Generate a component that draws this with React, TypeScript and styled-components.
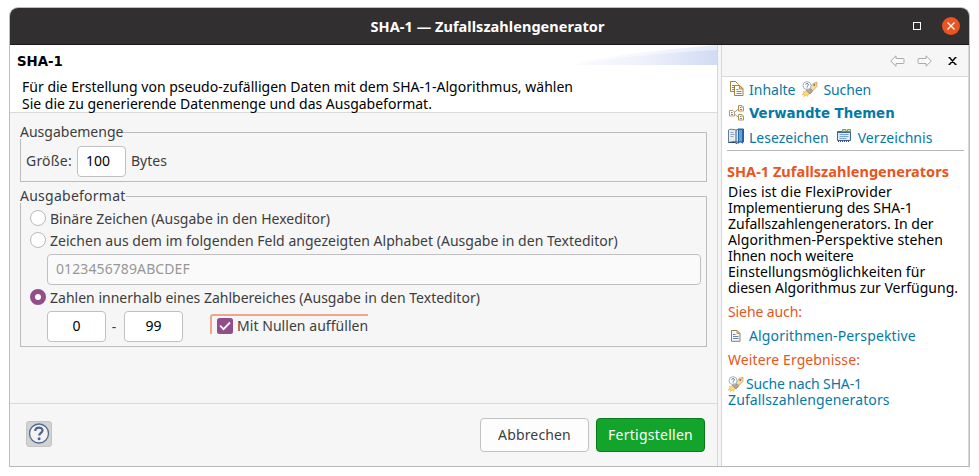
import React from "react";
import styled, { createGlobalStyle } from "styled-components";

const Global = createGlobalStyle`
  *, *::before, *::after { box-sizing: border-box; }
  body { margin: 0; background: #fff; }
  #root { display: flow-root; }
`;

const Window = styled.div`
  width: 961px;
  height: 460px;
  margin: 7px 0 0 9px;
  border: 1px solid #bebebe;
  border-bottom-color: #b8b8b8;
  border-radius: 9px 9px 0 0;
  overflow: hidden;
  display: flex;
  flex-direction: column;
  background: #f6f6f6;
  color: #3d3d3d;
  font: 14px/16px "Noto Sans", sans-serif;
`;

const Text = styled.span<{ $ls?: number }>`
  white-space: nowrap;
  letter-spacing: ${(p) => p.$ls ?? 0}px;
`;

const TitleBar = styled.header`
  height: 37px;
  flex: none;
  display: grid;
  grid-template-columns: 105px 1fr 109px;
  align-items: center;
  background: #322f30;
  border-bottom: 1px solid #1c1a1b;
  color: #fff;
  font-size: 14.5px;
  font-weight: 700;
  text-align: center;
`;

const WindowButtons = styled.div`
  display: flex;
  justify-content: flex-end;
  align-items: center;
  gap: 21px;
  padding-right: 9px;
`;

const Maximize = styled.span`
  width: 8px;
  height: 8px;
  border: 1px solid #fff;
`;

const Close = styled.span`
  width: 18px;
  height: 18px;
  border-radius: 50%;
  background: #e95420;
  display: grid;
  place-items: center;
`;

const Body = styled.div`
  flex: 1;
  display: flex;
  gap: 3px;
`;

const Main = styled.main`
  width: 708px;
  border-right: 1px solid #d6d6d6;
  display: flex;
  flex-direction: column;
`;

const Intro = styled.div`
  height: 68px;
  background: #fff;
  border-bottom: 1px solid #dadada;
  color: #000;
  display: flex;
  justify-content: space-between;
`;

const IntroText = styled.div`
  padding: 8px 0 0 7px;
`;

const Heading = styled.h1`
  margin: 0 0 8px;
  font: 700 13.33px/17px "DejaVu Sans", sans-serif;
`;

const IntroLine = styled.div`
  padding-left: 5px;
  line-height: 17px;
`;

const Swoosh = styled.svg`
  flex: none;
  display: block;
  width: 142px;
  height: 20px;
`;

const Form = styled.div`
  flex: 1;
  padding: 11px 10px 0;
`;

const Group = styled.section`
  margin-bottom: 6px;
`;

const GroupHead = styled.div`
  height: 15px;
  display: flex;
  align-items: flex-end;
`;

const GroupTitle = styled.div`
  height: 15px;
`;

const GroupRule = styled.div`
  flex: 1;
  height: 7px;
  border: solid #bcbcbc;
  border-width: 1px 1px 0 0;
`;

const GroupBody = styled.div<{ $height: number; $top: number }>`
  height: ${(p) => p.$height}px;
  padding: ${(p) => p.$top}px 5px 0;
  border: solid #bcbcbc;
  border-width: 0 1px 1px;
`;

const Row = styled.div`
  display: flex;
  align-items: center;
`;

const AmountRow = styled(Row)`
  height: 31px;
  gap: 5px;

  & > label, & > span { padding-bottom: 2px; }
`;

const AmountLabel = styled.label`
  width: 46px;
`;

const Field = styled.div<{ $width: number; $disabled?: boolean; $center?: boolean }>`
  width: ${(p) => p.$width}px;
  height: 31px;
  flex: none;
  padding: 6px 8px 0;
  border: 1px solid #c0c0c0;
  border-radius: 4px;
  background: ${(p) => (p.$disabled ? "#fafafa" : "#fff")};
  color: ${(p) => (p.$disabled ? "#979797" : "#000")};
  text-align: ${(p) => (p.$center ? "center" : "left")};
`;

const Option = styled(Row)`
  height: 22px;
  padding-left: 4px;
  gap: 4px;
`;

const OptionText = styled(Text)`
  padding-top: 2px;
`;

const Radio = styled.span<{ $on?: boolean }>`
  width: 16px;
  height: 16px;
  border-radius: 50%;
  border: ${(p) => (p.$on ? "5px solid #924d8b" : "1px solid #bababa")};
  background: #fff;
`;

const Indented = styled.div`
  display: flex;
  padding: 3px 0 1px 21px;
`;

const Range = styled(Indented)`
  align-items: center;
  height: 35px;
`;

const Dash = styled.span`
  width: 18px;
  padding-right: 2px;
  text-align: center;
`;

const Focused = styled.div`
  width: 158px;
  height: 20px;
  margin: -5px 0 0 27px;
  display: flex;
  align-items: center;
  gap: 4px;
  padding: 2px 0 0 5px;
  border: solid #f1a58b;
  border-width: 2px 0 0 2px;
  border-top-left-radius: 3px;
`;

const Check = styled.span`
  width: 16px;
  height: 16px;
  flex: none;
  border-radius: 2.5px;
  background: #924d8b;
  display: grid;
  place-items: center;
`;

const Footer = styled.footer`
  height: 63px;
  border-top: 1px solid #dadada;
  display: flex;
  align-items: center;
  gap: 7px;
  padding: 0 12px 0 16px;
`;

const Help = styled.div`
  width: 26px;
  height: 26px;
  margin: -2px auto 0 0;
  border: 1px solid #c4c4c4;
  border-radius: 3px;
  background: #d2d2d2;
  display: grid;
  place-items: center;
`;

const Button = styled.button<{ $primary?: boolean }>`
  width: 109px;
  height: 34px;
  padding: 0;
  font: inherit;
  border: 1px solid ${(p) => (p.$primary ? "#0b7a1c" : "#c2c2c2")};
  border-radius: 4px;
  background: ${(p) => (p.$primary ? "#12a42b" : "#fdfdfd")};
  color: ${(p) => (p.$primary ? "#fff" : "#3d3d3d")};
`;

const Side = styled.aside`
  flex: 1;
  border-left: 1px solid #d6d6d6;
  border-right: 1px solid #d8d8d8;
  background: #fff;
  color: #000;
`;

const SideTools = styled.div`
  height: 32px;
  background: #f6f6f6;
  border-bottom: 1px solid #dadada;
  display: flex;
  align-items: center;
  justify-content: flex-end;
  padding-right: 11px;
`;

const Links = styled.nav`
  height: 74px;
  margin: 0 4px 0 5px;
  border-bottom: 1px solid #b8b8b8;
  color: #0579a6;
`;

const LinkRow = styled.div<{ $height: number }>`
  height: ${(p) => p.$height}px;
  display: flex;
  align-items: center;

  & > span, & > strong { padding-top: 2px; }
`;

const Icon = styled.svg<{ $left?: number; $right?: number }>`
  display: block;
  flex: none;
  margin: 0 ${(p) => p.$right ?? 0}px 0 ${(p) => p.$left ?? 0}px;
`;

const Strong = styled.strong`
  font: 700 13.33px/16px "DejaVu Sans", sans-serif;
`;

const Article = styled.div`
  padding: 12px 0 0 6px;
`;

const Topic = styled.h2`
  margin: 0 0 5px -1px;
  font-size: 14.5px;
  line-height: 16px;
  color: #e95420;
`;

const Line = styled.div`
  height: 16px;
`;

const SubHead = styled.div`
  margin: 8px 0;
  height: 16px;
  color: #e95420;
`;

const ResultLink = styled.div`
  height: 16px;
  display: flex;
  align-items: center;
  color: #0579a6;
`;

const SearchIcon = ({ left = 0, right = 0 }: { left?: number; right?: number }) => (
  <Icon width="16" height="16" viewBox="0 0 16 16" $left={left} $right={right}>
    <path d="M7.5 7 11 2.5 15 1.2 14.8 5.5 10.5 10Z" fill="#f6d9a0" stroke="#cb9a5c" strokeWidth=".8" />
    <path d="m7.5 7 3 3-2.5 3-3.8-3.7Z" fill="#b5a69c" stroke="#857873" strokeWidth=".8" />
    <path d="m4.5 10-3.5.7 1.2 1L0 14l2.5-.7L1.8 15.6 4.4 14l.9 1.5L7 12.8Z" fill="#ffdc66" stroke="#e0b45c" strokeWidth=".6" />
    <circle cx="12.3" cy="4" r=".9" fill="#85684b" />
    <circle cx="5" cy="4.6" r="4" fill="#fff" stroke="#a5b4c7" />
    <path d="M3.7 3.8c0-1.8 2.8-1.7 2.7 0 0 .9-1.3 1-1.3 2M5.1 6.5v.9" fill="none" stroke="#4a6588" strokeWidth=".9" />
  </Icon>
);

const ContentsIcon = () => (
  <Icon width="14" height="16" viewBox="0 0 14 16" $left={3} $right={5}>
    <path d="M.5.5h5l3 3v7h-8Z" fill="#fff" stroke="#a18138" />
    <path d="M2 4.5h4M2 6.5h3M2 8.5h3" stroke="#6d86aa" />
    <path d="M4.5 4.5h5l3.5 3v7H4.5Z" fill="#fff" stroke="#a18138" />
    <path d="M9.5 4.5v3.5H13Z" fill="#efcf7c" stroke="#b28d3b" />
    <path d="M6.5 8.5h2M6.5 10.5h5M6.5 12.5h5" stroke="#6d86aa" />
  </Icon>
);

const RelatedIcon = () => (
  <Icon width="15" height="16" viewBox="0 0 15 16" $left={2} $right={5}>
    <path d="M5 7.5 9.5 4M5 8.5l4.5 4" stroke="#93a0b4" />
    <path d="M.5 5.5H4L5.5 7v4h-5Z" fill="#fff" stroke="#b7a26c" />
    <path d="M9.5.5H13L14.5 2v4h-5ZM9.5 9.5H13l1.5 1.5v4h-5Z" fill="#fff" stroke="#b49049" />
    <path d="M2 7.5h1.5M2 9.5h2M11 2.5h1M11 4.5h2M11 11.5h1M11 13.5h2" stroke="#7188aa" />
    <path d="M12.5.5V2.5h2M12.5 9.5v2h2" fill="none" stroke="#dfb964" />
  </Icon>
);

const BookIcon = () => (
  <Icon width="17" height="17" viewBox="0 0 17 17" $left={1} $right={4}>
    <path d="M.5 2 3 1.2 8.5 2v12L6 13.3.5 14.5Z" fill="#e6f0e9" stroke="#657d9c" />
    <path d="M2.5 4.5h3M2.5 6.5h4M2.5 8.5h3" stroke="#8fa5b4" />
    <path d="M8 2.5 10 1h5.5v13H8Z" fill="#d9e8f4" stroke="#345c86" />
    <path d="M10.5 1.5h4v13.8L12.5 13l-2 2.3Z" fill="#59a4e6" stroke="#2c66a5" />
    <path d="M.5 14.5h7l1 1.5 1-1.5" fill="none" stroke="#2f4e76" />
  </Icon>
);

const IndexIcon = () => (
  <Icon width="15" height="15" viewBox="0 0 15 15" $left={8} $right={6}>
    <path d="M.5 2.5h13v9H.5Z" fill="#dcecf9" stroke="#426691" />
    <path d="M1 3.5h12" stroke="#426691" />
    <path d="M5.5.5H9v2H5.5ZM10.5.5H13.5v2h-3Z" fill="#cfe4a0" stroke="#7b9e45" />
    <path d="M2.5 5.5h9M2.5 7.5h9M2.5 9.5h7" stroke="#7ba6d0" />
    <path d="M1.5 11v2M3.5 11v2M5.5 11v2M7.5 11v2M9.5 11v2M11.5 11v2" stroke="#36547d" />
  </Icon>
);

const TopicIcon = () => (
  <Icon width="10" height="12" viewBox="0 0 10 12" $left={3} $right={8}>
    <path d="M.5.5H6L9 3.5v7.8H.5Z" fill="#f4f8fd" stroke="#8b8058" />
    <path d="M6 .5v3h3Z" fill="#f2cb61" stroke="#c59a38" />
    <path d="M2 4.5h2.5M2 6.5h5.5M2 8.5h5.5" stroke="#6583b3" />
  </Icon>
);

const arrow = "M.7 6 6 .8V3.5H13q1 0 1 1v3q0 1-1 1H6v2.7Z";

export default function App() {
  return (
    <>
      <Global />
      <Window>
        <TitleBar>
          <span />
          <Text $ls={0.05}>SHA-1 — Zufallszahlengenerator</Text>
          <WindowButtons>
            <Maximize />
            <Close>
              <svg width="8" height="8" viewBox="0 0 8 8">
                <path d="m.5.5 7 7m0-7-7 7" stroke="#fff" strokeWidth="1.3" />
              </svg>
            </Close>
          </WindowButtons>
        </TitleBar>
        <Body>
          <Main>
            <Intro>
              <IntroText>
                <Heading>SHA-1</Heading>
                <IntroLine><Text $ls={0.01}>Für die Erstellung von pseudo-zufälligen Daten mit dem SHA-1-Algorithmus, wählen</Text></IntroLine>
                <IntroLine><Text>Sie die zu generierende Datenmenge und das Ausgabeformat.</Text></IntroLine>
              </IntroText>
              <Swoosh viewBox="0 0 142 20">
                <defs>
                  <linearGradient id="swoosh">
                    <stop offset="0" stopColor="#fafbff" />
                    <stop offset=".5" stopColor="#edf1fb" />
                    <stop offset="1" stopColor="#d2dbf4" />
                  </linearGradient>
                </defs>
                <path d="M0 20Q25 10 142 0V20Z" fill="url(#swoosh)" opacity=".55" />
                <path d="M0 20Q50 10 142 5V20Z" fill="url(#swoosh)" />
              </Swoosh>
            </Intro>
            <Form>
              <Group>
                <GroupHead>
                  <GroupTitle><Text>Ausgabemenge</Text></GroupTitle>
                  <GroupRule />
                </GroupHead>
                <GroupBody $height={43} $top={7}>
                  <AmountRow>
                    <AmountLabel><Text $ls={0.2}>Größe:</Text></AmountLabel>
                    <Field $width={49}><Text>100</Text></Field>
                    <Text>Bytes</Text>
                  </AmountRow>
                </GroupBody>
              </Group>
              <Group>
                <GroupHead>
                  <GroupTitle><Text $ls={0.25}>Ausgabeformat</Text></GroupTitle>
                  <GroupRule />
                </GroupHead>
                <GroupBody $height={144} $top={4}>
                  <Option><Radio /><OptionText>Binäre Zeichen (Ausgabe in den Hexeditor)</OptionText></Option>
                  <Option><Radio /><OptionText $ls={0.03}>Zeichen aus dem im folgenden Feld angezeigten Alphabet (Ausgabe in den Texteditor)</OptionText></Option>
                  <Indented>
                    <Field $width={654} $disabled><Text $ls={0.1}>0123456789ABCDEF</Text></Field>
                  </Indented>
                  <Option><Radio $on /><OptionText $ls={0.01}>Zahlen innerhalb eines Zahlbereiches (Ausgabe in den Texteditor)</OptionText></Option>
                  <Range>
                    <Field $width={59} $center>0</Field>
                    <Dash>-</Dash>
                    <Field $width={59} $center>99</Field>
                    <Focused>
                      <Check>
                        <svg width="12" height="10" viewBox="0 0 12 10">
                          <path d="m1 4.5 3.5 3.7L11 1.5" fill="none" stroke="#fff" strokeWidth="1.8" />
                        </svg>
                      </Check>
                      <Text $ls={0.05}>Mit Nullen auffüllen</Text>
                    </Focused>
                  </Range>
                </GroupBody>
              </Group>
            </Form>
            <Footer>
              <Help>
                <svg width="22" height="22" viewBox="0 0 22 22">
                  <circle cx="11" cy="10.5" r="9.5" fill="#f3f3f4" stroke="#526b90" strokeWidth="1.3" />
                  <path d="M7.3 8c0-4.7 7.5-4.3 7.2-.4-.2 2.2-3.3 2.4-3.3 5" fill="none" stroke="#4d6388" strokeWidth="2.2" />
                  <circle cx="11.1" cy="15.8" r="1.5" fill="#4d6388" />
                </svg>
              </Help>
              <Button><Text $ls={0.15}>Abbrechen</Text></Button>
              <Button $primary><Text $ls={0.25}>Fertigstellen</Text></Button>
            </Footer>
          </Main>
          <Side>
            <SideTools>
              <Icon width="15" height="12" viewBox="0 0 15 12" $right={12}>
                <path d={arrow} fill="#fafafa" stroke="#aaa" />
              </Icon>
              <Icon width="15" height="12" viewBox="0 0 15 12" $right={16}>
                <path d={arrow} fill="#fafafa" stroke="#aaa" transform="translate(15)scale(-1 1)" />
              </Icon>
              <Icon width="9" height="8" viewBox="0 0 9 8">
                <path d="m1.5.5 6 7m0-7-6 7M.5.5h2M6.5.5h2M.5 7.5h2M6.5 7.5h2" stroke="#000" strokeWidth="1.4" />
              </Icon>
            </SideTools>
            <Links>
              <LinkRow $height={24}>
                <ContentsIcon />
                <Text>Inhalte</Text>
                <SearchIcon left={7} right={5} />
                <Text $ls={-0.1}>Suchen</Text>
              </LinkRow>
              <LinkRow $height={23}>
                <RelatedIcon />
                <Strong>Verwandte Themen</Strong>
              </LinkRow>
              <LinkRow $height={25}>
                <BookIcon />
                <Text>Lesezeichen</Text>
                <IndexIcon />
                <Text $ls={0.05}>Verzeichnis</Text>
              </LinkRow>
            </Links>
            <Article>
              <Topic><Text $ls={0.02}>SHA-1 Zufallszahlengenerators</Text></Topic>
              <Line><Text $ls={0.17}>Dies ist die FlexiProvider</Text></Line>
              <Line><Text $ls={-0.05}>Implementierung des SHA-1</Text></Line>
              <Line><Text>Zufallszahlengenerators. In der</Text></Line>
              <Line><Text $ls={0.1}>Algorithmen-Perspektive stehen</Text></Line>
              <Line><Text $ls={-0.1}>Ihnen noch weitere</Text></Line>
              <Line><Text $ls={0.05}>Einstellungsmöglichkeiten für</Text></Line>
              <Line><Text>diesen Algorithmus zur Verfügung.</Text></Line>
              <SubHead><Text $ls={-0.1}>Siehe auch:</Text></SubHead>
              <ResultLink><TopicIcon /><Text $ls={0.15}>Algorithmen-Perspektive</Text></ResultLink>
              <SubHead><Text $ls={0.1}>Weitere Ergebnisse:</Text></SubHead>
              <ResultLink><SearchIcon right={2} /><Text $ls={-0.15}>Suche nach SHA-1</Text></ResultLink>
              <ResultLink><Text $ls={0.12}>Zufallszahlengenerators</Text></ResultLink>
            </Article>
          </Side>
        </Body>
      </Window>
    </>
  );
}
